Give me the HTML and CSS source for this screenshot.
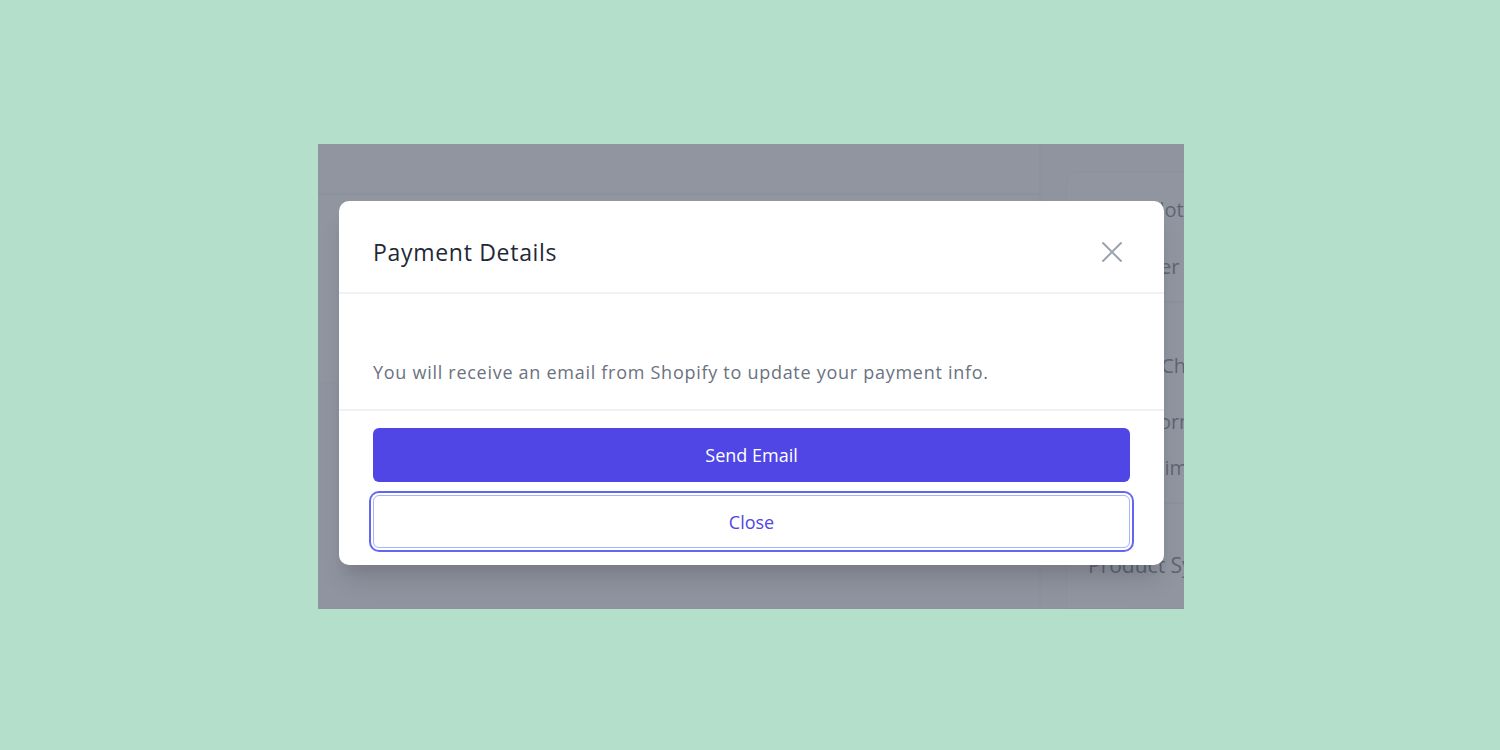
FILE: index.html
```html
<!DOCTYPE html>
<html lang="en">
<head>
<meta charset="utf-8">
<title>Payment Details</title>
<link rel="stylesheet" href="styles.css">
</head>
<body>
<div class="shot">
  <div class="page">
    <main class="main">
      <div class="main-top"></div>
      <div class="main-mid"></div>
      <div class="main-bottom"></div>
    </main>
    <aside class="side">
      <div class="card">
        <div class="card-sec first">
          <div class="row">Order Slot</div>
          <div class="row">Customer</div>
        </div>
        <div class="card-sec mid">
          <div class="row wide">Default Channel</div>
          <div class="row">Order Form</div>
          <div class="row">Item Claim</div>
        </div>
        <div class="card-sec last">
          <div class="row big">Product Sync</div>
        </div>
      </div>
    </aside>
  </div>
  <div class="overlay"></div>
  <div class="modal">
    <div class="modal-head">
      <h2 class="modal-title">Payment Details</h2>
      <button class="icon-btn" aria-label="Close">
        <svg width="22" height="22" viewBox="0 0 22 22" fill="none" stroke="#9ca3af" stroke-width="2" stroke-linecap="round"><path d="M2 2L20 20M20 2L2 20"/></svg>
      </button>
    </div>
    <div class="modal-body">
      <p class="modal-text">You will receive an email from Shopify to update your payment info.</p>
    </div>
    <div class="modal-foot">
      <button class="btn btn-primary">Send Email</button>
      <button class="btn btn-secondary">Close</button>
    </div>
  </div>
</div>
</body>
</html>
```

FILE: styles.css
```css
* { box-sizing: border-box; }
html, body { margin: 0; padding: 0; }
body {
  width: 1500px;
  height: 750px;
  background: #b4e0cb;
  font-family: "Open Sans", "Noto Sans", sans-serif;
  padding-top: 144px;
  overflow: hidden;
}
.shot {
  position: relative;
  width: 866px;
  height: 465px;
  margin-left: 318px;
  overflow: hidden;
  background: #ffffff;
}
.page {
  display: flex;
  height: 100%;
}
.main {
  width: 724px;
  flex-shrink: 0;
  display: flex;
  flex-direction: column;
  border-right: 3px solid #f3f4f6;
}
.main-top {
  height: 51px;
  border-bottom: 2px solid #eceef1;
  background: #fff;
}
.main-mid {
  height: 188px;
  background: #fff;
  border-bottom: 1px solid #f0f1f3;
}
.main-bottom {
  flex: 1;
  background: #fcfcfd;
}
.side {
  flex: 1;
  min-width: 0;
  background: #fbfbfc;
  padding: 28px 0 0 24px;
  display: flex;
  flex-direction: column;
}
.card {
  background: #fff;
  border-radius: 10px 0 0 0;
  border: 1px solid #eef0f2;
  border-right: none;
  flex: 1;
  display: flex;
  flex-direction: column;
}
.card-sec {
  padding-left: 21px;
  border-bottom: 2px solid #eef0f2;
  display: flex;
  flex-direction: column;
}
.card-sec.first { padding-top: 24px; padding-bottom: 21px; gap: 31px; }
.card-sec.mid { padding-top: 50px; padding-bottom: 21px; gap: 20px; }
.card-sec.mid .wide { margin-bottom: 10px; }
.card-sec.last { border-bottom: none; padding-top: 48px; }
.row {
  font-size: 20px;
  line-height: 26px;
  color: #374151;
  white-space: nowrap;
}
.row.big { font-size: 21px; }
.overlay {
  position: absolute;
  inset: 0;
  background: rgba(107, 114, 128, 0.75);
}
.modal {
  position: absolute;
  left: 21px;
  top: 57px;
  width: 825px;
  height: 364px;
  background: #ffffff;
  border-radius: 10px;
  box-shadow: 0 20px 25px -5px rgba(0, 0, 0, 0.12), 0 10px 12px -5px rgba(0, 0, 0, 0.06);
  display: flex;
  flex-direction: column;
}
.modal-head {
  height: 93px;
  border-bottom: 2px solid #eff1f4;
  display: flex;
  align-items: center;
  justify-content: space-between;
  padding: 10px 41px 0 34px;
}
.modal-title {
  margin: 0;
  font-size: 23px;
  font-weight: 400;
  color: #1f2937;
  letter-spacing: 0.7px;
}
.icon-btn {
  border: none;
  background: none;
  padding: 0;
  width: 22px;
  height: 22px;
  display: flex;
  align-items: center;
  justify-content: center;
  cursor: pointer;
}
.modal-body {
  height: 117px;
  border-bottom: 2px solid #eff1f4;
  padding: 66px 34px 0 34px;
}
.modal-text {
  margin: 0;
  font-size: 18px;
  line-height: 24px;
  color: #6b7280;
  letter-spacing: 0.72px;
}
.modal-foot {
  flex: 1;
  padding: 17px 34px 0 34px;
  display: flex;
  flex-direction: column;
  gap: 13px;
}
.btn {
  font-family: inherit;
  width: 100%;
  border-radius: 6px;
  font-size: 18px;
  cursor: pointer;
}
.btn-primary {
  height: 54px;
  background: #4f46e5;
  color: #ffffff;
  border: none;
}
.btn-secondary {
  height: 53px;
  background: #ffffff;
  color: #4f46e5;
  border: 1px solid #a5b4fc;
  box-shadow: 0 0 0 2px #ffffff, 0 0 0 4px #6366f1;
}
```
